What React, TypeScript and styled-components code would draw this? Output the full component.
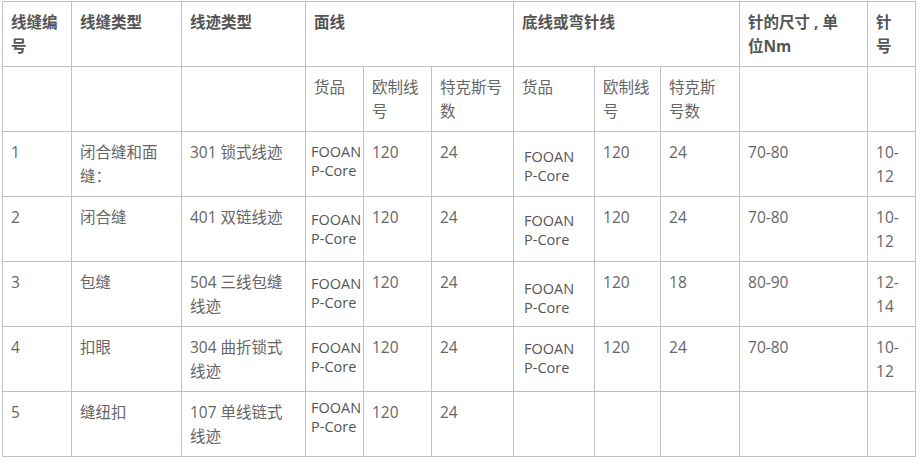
import React from 'react';
import styled, { createGlobalStyle } from 'styled-components';

const GlobalStyle = createGlobalStyle`
  html, body {
    margin: 0;
    padding: 0;
    background: #ffffff;
  }
  body {
    font-family: "Open Sans", "Noto Sans CJK SC", sans-serif;
  }
`;

const Page = styled.div`
  padding: 1px 0 0 2px;
`;

const Table = styled.table`
  border-collapse: collapse;
  table-layout: fixed;
  width: 913px;
  color: #666666;
  font-size: 15.5px;
`;

const Row = styled.tr`
  height: 65px;
`;

const Cell = styled.td`
  border: 1px solid #c0c0c0;
  padding: 8px 8px 0 8px;
  vertical-align: top;
  line-height: 24px;
  white-space: nowrap;
  overflow: visible;
`;

const HeadCell = styled(Cell).attrs({ as: 'th' })`
  text-align: left;
  font-weight: 700;
  color: #555555;
`;

const ProductCell = styled(Cell)<{ $top: number; $left: number }>`
  padding: ${({ $top }) => $top}px 0 0 ${({ $left }) => $left}px;
  font-size: 14.5px;
  line-height: 18.5px;
  color: #555555;
`;

const widths = [69, 110, 124, 58, 68, 82, 81, 66, 79, 128, 48];

const Lines = ({ text }: { text: string }) => (
  <>
    {text.split('\n').map((line, i) => (
      <React.Fragment key={i}>
        {i > 0 && <br />}
        {line}
      </React.Fragment>
    ))}
  </>
);

type DataRow = {
  no: string;
  seam: string;
  stitch: string;
  top: [string, string];
  bottom: [string, string] | null;
  size: string;
  needle: string;
  pads: [number, number];
};

const rows: DataRow[] = [
  { no: '1', seam: '闭合缝和面\n缝：', stitch: '301 锁式线迹', top: ['120', '24'], bottom: ['120', '24'], size: '70-80', needle: '10-\n12', pads: [11, 16] },
  { no: '2', seam: '闭合缝', stitch: '401 双链线迹', top: ['120', '24'], bottom: ['120', '24'], size: '70-80', needle: '10-\n12', pads: [14, 15] },
  { no: '3', seam: '包缝', stitch: '504 三线包缝\n线迹', top: ['120', '24'], bottom: ['120', '18'], size: '80-90', needle: '12-\n14', pads: [13, 18] },
  { no: '4', seam: '扣眼', stitch: '304 曲折锁式\n线迹', top: ['120', '24'], bottom: ['120', '24'], size: '70-80', needle: '10-\n12', pads: [12, 13] },
  { no: '5', seam: '缝纽扣', stitch: '107 单线链式\n线迹', top: ['120', '24'], bottom: null, size: '', needle: '', pads: [7, 0] },
];

const Product = ({ top, left }: { top: number; left: number }) => (
  <ProductCell $top={top} $left={left}>
    FOOAN
    <br />
    P-Core
  </ProductCell>
);

export default function App() {
  return (
    <Page>
      <GlobalStyle />
      <Table>
        <colgroup>
          {widths.map((w, i) => (
            <col key={i} style={{ width: w }} />
          ))}
        </colgroup>
        <thead>
          <Row>
            <HeadCell><Lines text={'线缝编\n号'} /></HeadCell>
            <HeadCell>线缝类型</HeadCell>
            <HeadCell>线迹类型</HeadCell>
            <HeadCell colSpan={3}>面线</HeadCell>
            <HeadCell colSpan={3}>底线或弯针线</HeadCell>
            <HeadCell><Lines text={'针的尺寸 , 单\n位Nm'} /></HeadCell>
            <HeadCell><Lines text={'针\n号'} /></HeadCell>
          </Row>
        </thead>
        <tbody>
          <Row>
            <Cell />
            <Cell />
            <Cell />
            <Cell>货品</Cell>
            <Cell><Lines text={'欧制线\n号'} /></Cell>
            <Cell><Lines text={'特克斯号\n数'} /></Cell>
            <Cell>货品</Cell>
            <Cell><Lines text={'欧制线\n号'} /></Cell>
            <Cell><Lines text={'特克斯\n号数'} /></Cell>
            <Cell />
            <Cell />
          </Row>
          {rows.map((r) => (
            <Row key={r.no}>
              <Cell>{r.no}</Cell>
              <Cell><Lines text={r.seam} /></Cell>
              <Cell><Lines text={r.stitch} /></Cell>
              <Product top={r.pads[0]} left={5} />
              <Cell>{r.top[0]}</Cell>
              <Cell>{r.top[1]}</Cell>
              {r.bottom ? (
                <>
                  <Product top={r.pads[1]} left={10} />
                  <Cell>{r.bottom[0]}</Cell>
                  <Cell>{r.bottom[1]}</Cell>
                </>
              ) : (
                <>
                  <Cell />
                  <Cell />
                  <Cell />
                </>
              )}
              <Cell>{r.size}</Cell>
              <Cell><Lines text={r.needle} /></Cell>
            </Row>
          ))}
        </tbody>
      </Table>
    </Page>
  );
}
